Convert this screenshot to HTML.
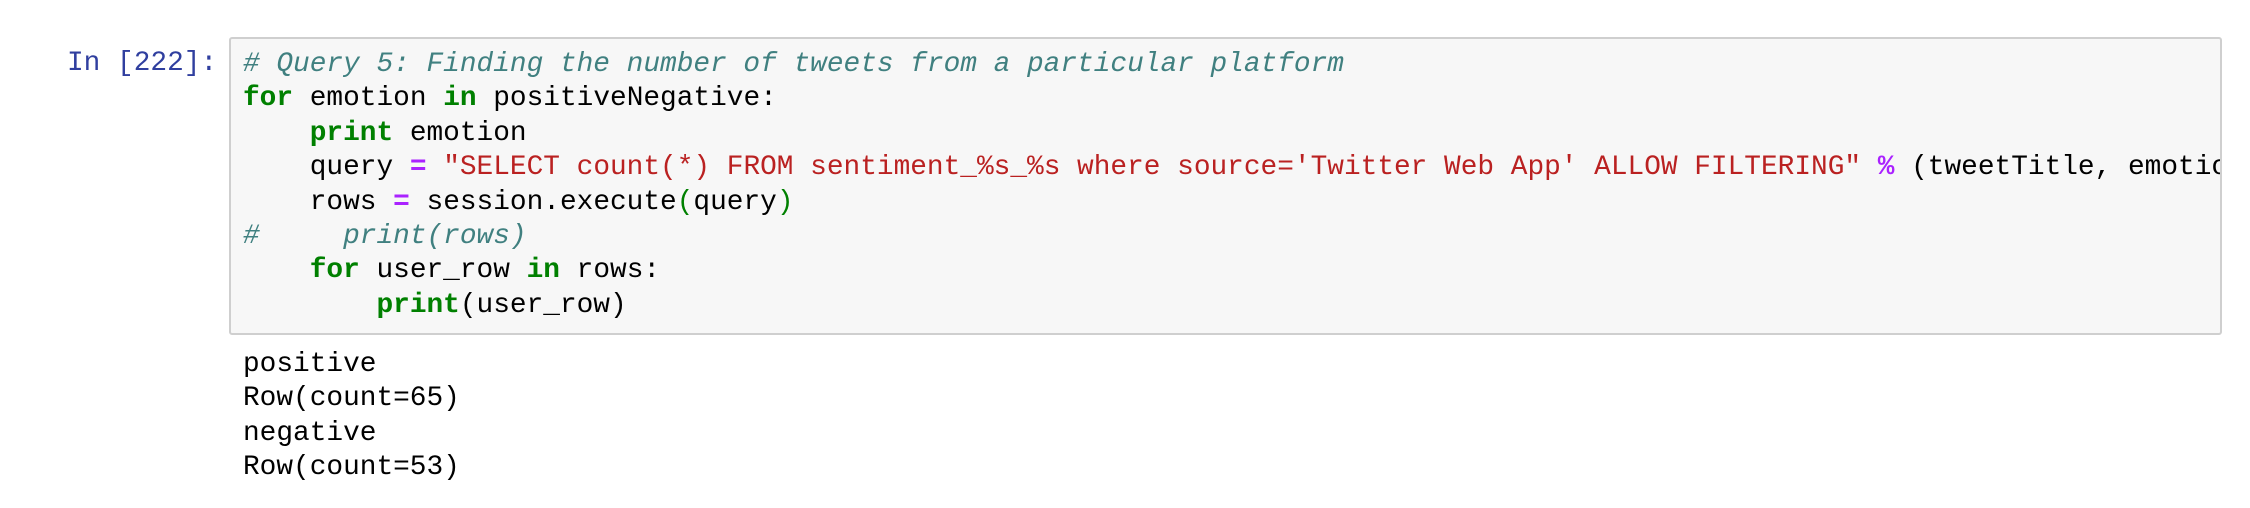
<!DOCTYPE html>
<html><head><style>
html,body{margin:0;padding:0;background:#fff;width:2250px;height:508px;overflow:hidden}
.m{font-family:"Liberation Mono",monospace;font-size:27.8px;line-height:34.4px;white-space:pre}
#p{position:absolute;left:67px;top:47px;color:#303F9F}
#box{position:absolute;left:229px;top:37px;width:1989px;height:294px;background:#f7f7f7;border:2px solid #cfcfcf;border-radius:3px;overflow:hidden}
#code{position:absolute;left:12px;top:9px;color:#000}
#out{position:absolute;left:243px;top:348px;color:#000}
.c{color:#408080;font-style:italic}
.k{color:#008000;font-weight:bold}
.s{color:#BA2121}
.o{color:#AA22FF;font-weight:bold}
.b{color:#008000}
</style></head><body>
<div id="p" class="m">In [222]:</div>
<div id="box"><div id="code" class="m"><span class="c"># Query 5: Finding the number of tweets from a particular platform</span>
<span class="k">for</span> emotion <span class="k">in</span> positiveNegative:
    <span class="k">print</span> emotion
    query <span class="o">=</span> <span class="s">"SELECT count(*) FROM sentiment_%s_%s where source='Twitter Web App' ALLOW FILTERING"</span> <span class="o">%</span> (tweetTitle, emotion)
    rows <span class="o">=</span> session.execute<span class="b">(</span>query<span class="b">)</span>
<span class="c">#     print(rows)</span>
    <span class="k">for</span> user_row <span class="k">in</span> rows:
        <span class="k">print</span>(user_row)</div></div>
<div id="out" class="m">positive
Row(count=65)
negative
Row(count=53)</div>
</body></html>
